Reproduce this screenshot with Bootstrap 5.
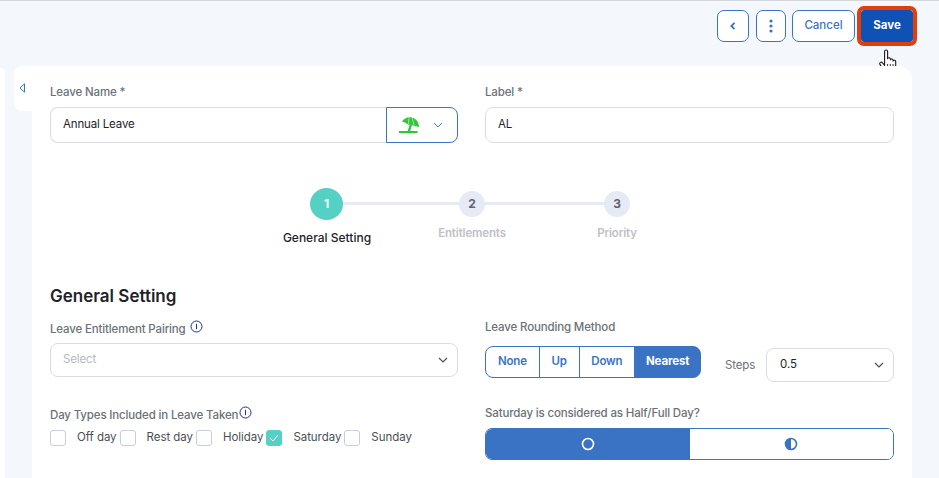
<!DOCTYPE html>
<html lang="en">
<head>
<meta charset="UTF-8">
<meta name="viewport" content="width=device-width, initial-scale=1.0">
<title>Leave Settings</title>
<link href="https://cdn.jsdelivr.net/npm/bootstrap@5.3.0/dist/css/bootstrap.min.css" rel="stylesheet">
<style>
html, body { height: 478px; overflow: hidden; }
body { background: #f4f7fc; font-family: Inter, "Liberation Sans", sans-serif; font-size: 11.5px; letter-spacing: -.15px; color: #1f2328; border-top: 1px solid #d4d6da; position: relative; }
.side-sliver { position: absolute; left: 0; top: 67px; width: 5px; height: 420px; background: #fff; border-top-right-radius: 6px; }
.top-actions { height: 65px; padding: 9px 26px 0 0; gap: 6px; align-items: flex-start; }
.act-btn { height: 32px; border: 1px solid #3b73c4; border-radius: 7px; background: #fff; color: #3b73c4; font-size: 11.5px; font-weight: 500; padding: 0; display: flex; align-items: center; justify-content: center; }
.act-back { width: 32px; margin-right: 1px; }
.act-more { width: 30px; }
.act-cancel { width: 63px; }
.act-save { width: 52px; background: #0f51b5; border-color: #0f51b5; border-radius: 3px; color: #fff; font-weight: 700; outline: 4px solid #e23d0c; outline-offset: 0; }
.hand-cursor { position: absolute; left: 879px; top: 48px; }
.main-card { margin: 0 27px 0 32px; background: #fff; border-radius: 14px 14px 0 0; padding: 19px 18px 0; position: relative; height: 420px; }
.collapse-tab { position: absolute; left: -18px; top: 0; width: 30px; height: 45px; background: #fff; border-radius: 8px 0 0 8px; padding: 17px 0 0 5px; line-height: 0; }
.form-cols { --bs-gutter-x: 27px; }
.form-cols > .col-6:first-child { width: 435px; }
.form-cols > .col-6:last-child { width: 436px; }
.fld-label { color: #6c7177; font-size: 11.5px; font-weight: 500; line-height: 14px; margin-bottom: 8px; display: block; }
.fld-label.tight-label { margin-bottom: 7px; }
.fld-input { height: 36px; border: 1.5px solid #dadde4; border-radius: 8px; font-size: 11.5px; color: #1f2328; padding: 0 12px 2px; box-shadow: none; letter-spacing: -.15px; }
.name-input { border-radius: 8px 0 0 8px; border-right: 0; flex: 1; }
.icon-pick { width: 72px; height: 36px; border: 1px solid #3b73c4; border-radius: 0 8px 8px 0; background: #fff; display: flex; align-items: center; padding-left: 12px; gap: 13px; flex: none; }
.step-row { justify-content: center; margin-top: 45px; height: 68px; }
.step-item { width: 145px; display: flex; flex-direction: column; align-items: center; position: relative; }
.step-item:not(:last-child)::after { content: ""; position: absolute; left: 50%; width: 100%; top: 14px; height: 3px; background: #e6eaf5; }
.step-dot { width: 26px; height: 26px; margin: 3px 0 8px; border-radius: 50%; background: #e6eaf5; color: #5d6470; font-weight: 700; font-size: 12px; display: flex; align-items: center; justify-content: center; position: relative; z-index: 1; }
.step-dot.is-on { width: 33px; height: 32px; margin: 0 0 10px -1px; background: #55d0c5; color: #fff; }
.step-name { color: #bfc1c4; font-weight: 600; line-height: 16px; white-space: nowrap; }
.step-name.is-on { color: #1f2328; font-size: 12px; font-weight: 500; letter-spacing: 0; }
.sect-title { font-size: 17px; font-weight: 600; color: #1f2328; margin: 30px 0 14px; line-height: 20px; letter-spacing: 0; }
.plain-select { height: 34px; border: 1.5px solid #dadde4; border-radius: 8px; padding: 0 9px 0 12px; display: flex; align-items: center; justify-content: space-between; color: #b8babd; }
.info-mark { margin-left: 1px; vertical-align: 0; }
.round-group { height: 32px; width: 216px; margin-top: 12px; flex: none; }
.round-group .btn { --bs-btn-font-size: 11.5px; --bs-btn-font-weight: 600; --bs-btn-padding-x: 0; --bs-btn-padding-y: 0; --bs-btn-color: #3b73c4; --bs-btn-border-color: #3b73c4; display: flex; align-items: center; justify-content: center; border-radius: 8px; letter-spacing: -.15px; }
.round-group .btn.active { background: #3b73c4; border-color: #3b73c4; color: #fff; font-weight: 700; }
.round-none { width: 54px; }
.round-up { width: 40px; }
.round-down { width: 56px; }
.round-near { width: 66px; }
.steps-label { color: #6c7177; margin: 0 11px 0 24px; position: relative; top: 8px; }
.steps-select { width: 128px; height: 34px; margin-top: 14px; flex: none; color: #1f2328; border: 1.5px solid #dadde4; border-radius: 8px; padding: 0 9px 0 13px; display: flex; align-items: center; justify-content: space-between; }
.second-row { margin-top: 24px; }
.check-box { width: 16px; height: 16px; border: 1px solid #c9cddc; border-radius: 3px; background: #fff; display: inline-flex; align-items: center; justify-content: center; flex: none; }
.check-box.is-on { background: #55d0c5; border-color: #55d0c5; }
.check-text { color: #4b4f55; margin: 0 3px 0 11px; white-space: nowrap; letter-spacing: -.05px; }
.half-toggle { height: 32px; border: 1px solid #3b73c4; border-radius: 7px; overflow: hidden; margin-top: 1px; }
.half-opt { flex: 0 0 50%; display: flex; align-items: center; justify-content: center; background: #fff; }
.half-opt.is-on { background: #3b73c4; }
</style>
</head>
<body>
<div class="side-sliver"></div>

<div class="d-flex justify-content-end top-actions">
    <button class="act-btn act-back" aria-label="Back">
        <svg width="10" height="10" viewBox="0 0 10 10"><path d="M6.500 1.800 3.300 5l3.200 3.200" fill="none" stroke="#3b73c4" stroke-width="1.800"/></svg>
    </button>
    <button class="act-btn act-more" aria-label="More">
        <svg width="4" height="14" viewBox="0 0 4 14" fill="#3b73c4"><circle cx="2" cy="2" r="1.600"/><circle cx="2" cy="7" r="1.600"/><circle cx="2" cy="12" r="1.600"/></svg>
    </button>
    <button class="act-btn act-cancel">Cancel</button>
    <button class="act-btn act-save">Save</button>
</div>

<svg class="hand-cursor" width="19" height="26" viewBox="0 0 19 26">
    <path d="M5.600 2.500c0-2 3-2 3 0v7.200c.2-1.300 2.700-1.200 2.800.3v.8c.3-1.300 2.600-1.100 2.700.4v.8c.4-1.200 2.600-1 2.600.6v5.400c0 4-2.500 6.700-6.300 6.700-3 0-4.700-1.200-6-3.500L1 15.400c-1-1.800 1.300-3.100 2.500-1.500l2.100 2.500z" fill="#fff" stroke="#1c1c1c" stroke-width="1.100" stroke-linejoin="round"/>
    <path d="M8.600 15v5M11.300 15v5M14 15v5" stroke="#1c1c1c" stroke-width=".9"/>
</svg>

<div class="main-card">
    <div class="collapse-tab">
        <svg width="7" height="10" viewBox="0 0 7 10"><path d="M5.500.8 1 5l4.500 4.200z" fill="none" stroke="#3b73c4"/></svg>
    </div>

    <div class="row form-cols">
        <div class="col-6">
            <label class="fld-label">Leave Name *</label>
            <div class="d-flex">
                <input class="form-control fld-input name-input" value="Annual Leave">
                <div class="icon-pick">
                    <svg width="21" height="17" viewBox="0 0 21 17">
                        <path d="M3 4.800C5 1 9-.5 13 .5c4 1 7 4.500 7 9.800-1.500-1-3-1.200-4.300-.8C14 8 11.500 7.400 9.500 7.800 7.500 6.200 5 5 3 4.800z" fill="#31c63a"/>
                        <path d="M10 .3 9.300 7M13 .5l2.300 8.500" stroke="#fff" stroke-width=".5" fill="none"/>
                        <path d="M10.700 7.500h2.400L11.200 14H8.700z" fill="#31c63a"/>
                        <rect x="0" y="14" width="18.500" height="2.200" fill="#31c63a"/>
                    </svg>
                    <svg width="10" height="6" viewBox="0 0 10 6"><path d="M1 1l4 4 4-4" fill="none" stroke="#3b73c4" stroke-width=".9"/></svg>
                </div>
            </div>
        </div>
        <div class="col-6">
            <label class="fld-label">Label *</label>
            <input class="form-control fld-input" value="AL">
        </div>
    </div>

    <div class="d-flex step-row">
        <div class="step-item"><div class="step-dot is-on">1</div><div class="step-name is-on">General Setting</div></div>
        <div class="step-item"><div class="step-dot">2</div><div class="step-name">Entitlements</div></div>
        <div class="step-item"><div class="step-dot">3</div><div class="step-name">Priority</div></div>
    </div>

    <h5 class="sect-title">General Setting</h5>

    <div class="row form-cols">
        <div class="col-6">
            <label class="fld-label tight-label">Leave Entitlement Pairing
                <svg class="info-mark" width="13" height="13" viewBox="0 0 13 13"><circle cx="6.500" cy="6.500" r="5.500" fill="none" stroke="#1c2f9c"/><path d="M6.500 3.800v5.400" stroke="#1c2f9c"/></svg>
            </label>
            <div class="plain-select">
                <span>Select</span>
                <svg width="10" height="6" viewBox="0 0 10 6"><path d="M1 1l4 4 4-4" fill="none" stroke="#4b4f55" stroke-width="1.200"/></svg>
            </div>
        </div>
        <div class="col-6">
            <label class="fld-label mb-0">Leave Rounding Method</label>
            <div class="d-flex">
                <div class="btn-group round-group" role="group">
                    <button class="btn btn-outline-primary round-none">None</button>
                    <button class="btn btn-outline-primary round-up">Up</button>
                    <button class="btn btn-outline-primary round-down">Down</button>
                    <button class="btn btn-outline-primary active round-near">Nearest</button>
                </div>
                <span class="steps-label align-self-center">Steps</span>
                <div class="steps-select ms-auto">
                    <span>0.5</span>
                    <svg width="10" height="6" viewBox="0 0 10 6"><path d="M1 1l4 4 4-4" fill="none" stroke="#4b4f55" stroke-width="1.200"/></svg>
                </div>
            </div>
        </div>
    </div>

    <div class="row form-cols second-row">
        <div class="col-6">
            <label class="fld-label tight-label">Day Types Included in Leave Taken<svg class="info-mark" width="13" height="13" viewBox="0 0 13 13"><circle cx="6.500" cy="6.500" r="5.500" fill="none" stroke="#1c2f9c"/><path d="M6.500 3.800v5.400" stroke="#1c2f9c"/></svg></label>
            <div class="d-flex align-items-center">
                <span class="check-box"></span><span class="check-text">Off day</span>
                <span class="check-box"></span><span class="check-text">Rest day</span>
                <span class="check-box"></span><span class="check-text">Holiday</span>
                <span class="check-box is-on"><svg width="10" height="8" viewBox="0 0 10 8"><path d="M1 4l3 3 5-6" fill="none" stroke="#fff"/></svg></span><span class="check-text">Saturday</span>
                <span class="check-box"></span><span class="check-text">Sunday</span>
            </div>
        </div>
        <div class="col-6">
            <label class="fld-label">Saturday is considered as Half/Full Day?</label>
            <div class="d-flex half-toggle">
                <div class="half-opt is-on"><svg width="14" height="14" viewBox="0 0 14 14"><circle cx="7" cy="7" r="5.500" fill="none" stroke="#fff" stroke-width="1.600"/></svg></div>
                <div class="half-opt"><svg width="14" height="14" viewBox="0 0 14 14"><circle cx="7" cy="7" r="5.500" fill="none" stroke="#3b73c4" stroke-width="1.600"/><path d="M7 1.500a5.500 5.500 0 0 0 0 11z" fill="#3b73c4"/></svg></div>
            </div>
        </div>
    </div>
</div>
</body>
</html>
